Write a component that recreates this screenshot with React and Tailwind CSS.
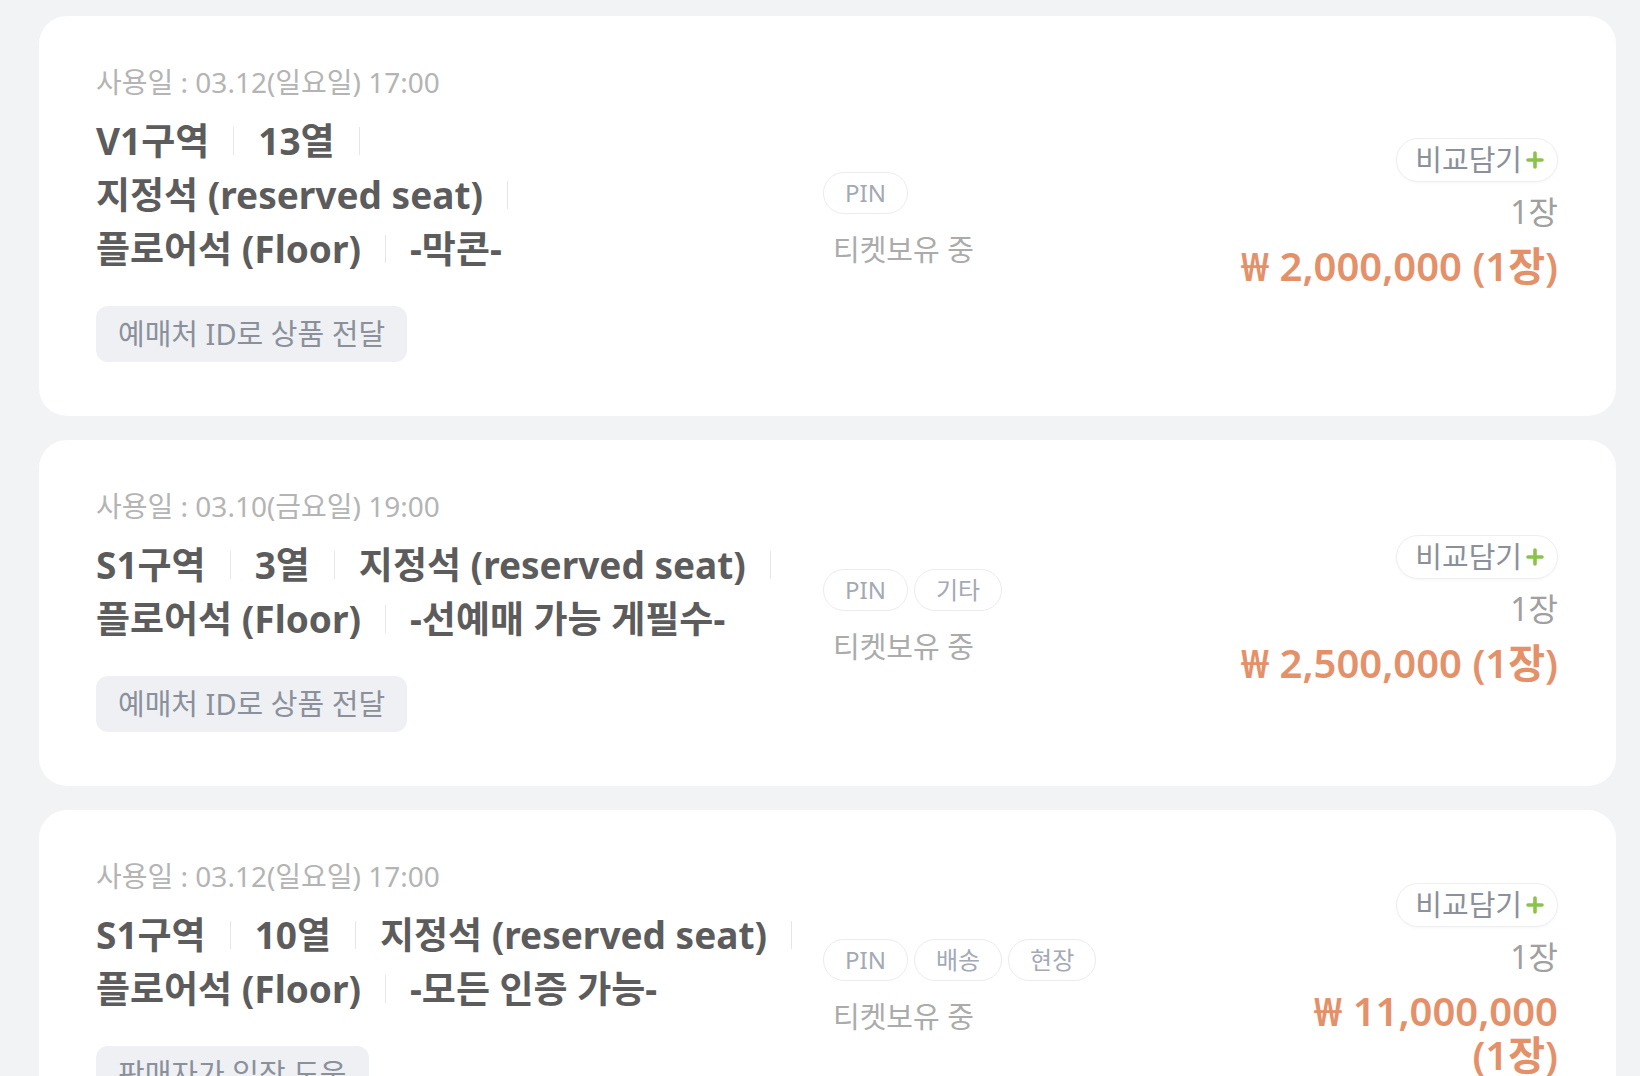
import React from 'react';

const FONT = { fontFamily: '"Noto Sans", "Noto Sans CJK KR", sans-serif' };

const listings = [
  {
    id: 1,
    date: '사용일 : 03.12(일요일) 17:00',
    lines: [['V1구역', '13열'], ['지정석 (reserved seat)'], ['플로어석 (Floor)', '-막콘-']],
    delivery: '예매처 ID로 상품 전달',
    tags: ['PIN'],
    qty: '1장',
    price: ['₩ 2,000,000 (1장)'],
  },
  {
    id: 2,
    date: '사용일 : 03.10(금요일) 19:00',
    lines: [['S1구역', '3열', '지정석 (reserved seat)'], ['플로어석 (Floor)', '-선예매 가능 게필수-']],
    delivery: '예매처 ID로 상품 전달',
    tags: ['PIN', '기타'],
    qty: '1장',
    price: ['₩ 2,500,000 (1장)'],
  },
  {
    id: 3,
    date: '사용일 : 03.12(일요일) 17:00',
    lines: [['S1구역', '10열', '지정석 (reserved seat)'], ['플로어석 (Floor)', '-모든 인증 가능-']],
    delivery: '판매자가 입장 도움',
    tags: ['PIN', '배송', '현장'],
    qty: '1장',
    price: ['₩ 11,000,000', '(1장)'],
  },
];

const Divider = () => <span className="mx-[24px] h-[28px] w-px shrink-0 bg-[#e6e6e6]" />;

const SeatInfo = ({ lines }) => {
  const lastLine = lines.length - 1;
  return (
    <div className="mt-[14px]">
      {lines.map((items, li) => (
        <div
          key={li}
          className="flex h-[54px] items-center whitespace-nowrap text-[37px] font-bold text-[#5c5c5c]"
        >
          {items.map((item, ii) => (
            <React.Fragment key={ii}>
              <span>{item}</span>
              {!(li === lastLine && ii === items.length - 1) && <Divider />}
            </React.Fragment>
          ))}
        </div>
      ))}
    </div>
  );
};

const ListingCard = ({ item }) => (
  <div className="flex items-center rounded-[28px] bg-white pb-[54px] pl-[57px] pr-[58px] pt-[48px]">
    {/* left: date, seat, delivery */}
    <div className="w-[727px] shrink-0">
      <div className="text-[28px] leading-[36px] text-[#b4b4b4]">{item.date}</div>
      <SeatInfo lines={item.lines} />
      <div className="mt-[30px] inline-block rounded-[12px] bg-[#eef0f4] px-[22px] py-[11px] text-[29px] leading-[34px] text-[#8b909a]">
        {item.delivery}
      </div>
    </div>

    {/* middle: tags + status */}
    <div className="mt-[12px] flex min-w-0 flex-1 flex-col items-start">
      <div className="flex gap-[6px]">
        {item.tags.map((tag) => (
          <span
            key={tag}
            className="flex h-[42px] items-center rounded-full border border-[#ececec] px-[21px] text-[24px] text-[#a3a9b5]"
          >
            {tag}
          </span>
        ))}
      </div>
      <div className="mt-[19px] pl-[10px] text-[29px] leading-[34px] text-[#ababab]">티켓보유 중</div>
    </div>

    {/* right: compare, qty, price */}
    <div className="flex w-[340px] shrink-0 flex-col items-end text-right">
      <button
        type="button"
        className="flex h-[44px] items-center gap-[3px] rounded-full border border-[#eeeeee] pl-[18px] pr-[12px] text-[29px] text-[#8b909a] shadow-[0_1px_3px_rgba(0,0,0,0.04)]"
      >
        비교담기
        <svg width="20" height="20" viewBox="0 0 20 20" className="text-[#8bc34a]">
          <path d="M10 3v14M3 10h14" stroke="currentColor" strokeWidth="3.6" strokeLinecap="round" />
        </svg>
      </button>
      <div className="mt-[11px] text-[32px] leading-[38px] text-[#a0a0a0]">{item.qty}</div>
      <div className="mt-[13px]">
        {item.price.map((p) => (
          <div key={p} className="whitespace-nowrap text-[40px] font-semibold leading-[44px] text-[#e4916a]">
            {p}
          </div>
        ))}
      </div>
    </div>
  </div>
);

export default function App() {
  return (
    <div className="h-screen overflow-hidden bg-[#f2f3f5] pl-[39px] pr-[24px] pt-[16px]" style={FONT}>
      <div className="flex flex-col gap-[24px]">
        {listings.map((item) => (
          <ListingCard key={item.id} item={item} />
        ))}
      </div>
    </div>
  );
}
